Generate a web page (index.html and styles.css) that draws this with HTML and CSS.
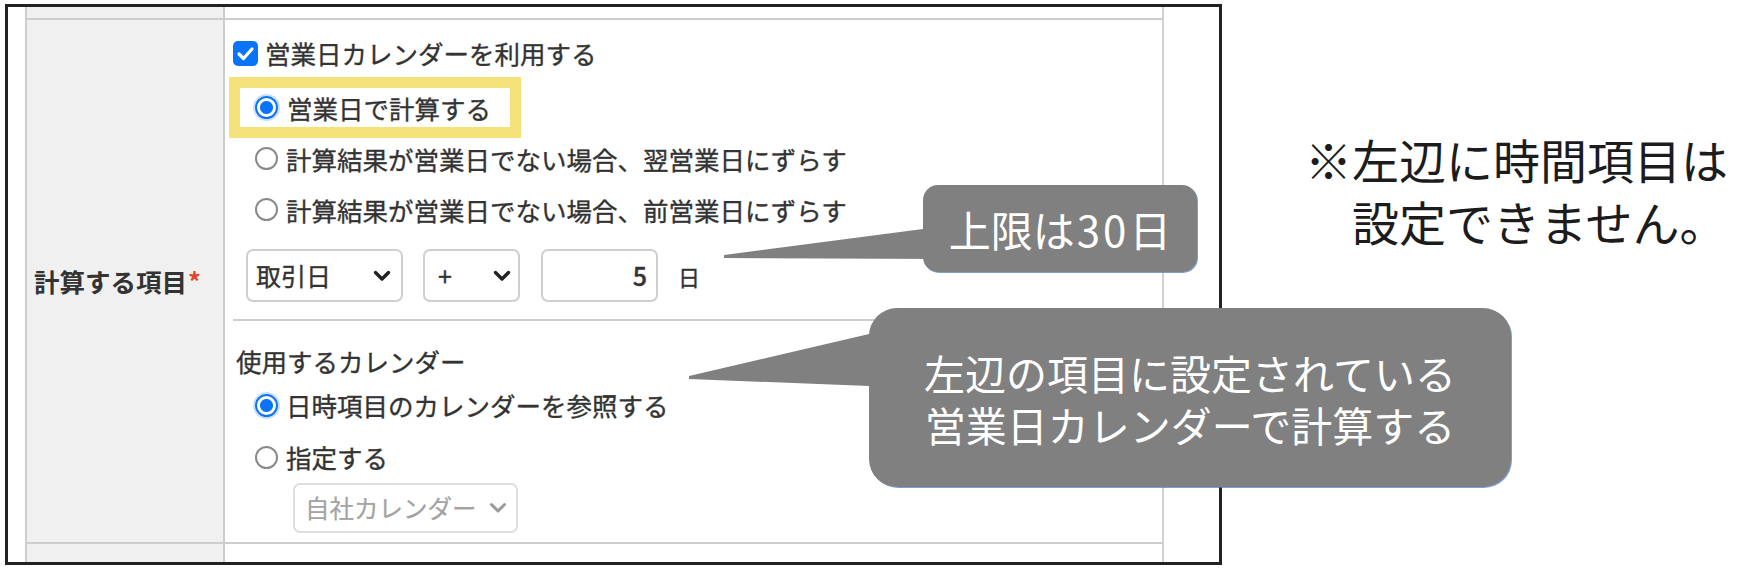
FILE: index.html
```
<!DOCTYPE html>
<html lang="ja">
<head>
<meta charset="utf-8">
<title>計算する項目</title>
<link rel="stylesheet" href="styles.css">
</head>
<body>
<div class="page">
  <div class="frame">
    <div class="table">
      <div class="lab top"></div>
      <div class="cell top"></div>

      <div class="lab main"><span>計算する項目</span><span class="req">*</span></div>
      <div class="cell main">
        <div class="row chk-row">
          <span class="checkbox"><svg viewBox="0 0 25 25" width="25" height="25"><path d="M6 13 L10.5 17.5 L19 8" fill="none" stroke="#fff" stroke-width="3.2" stroke-linecap="round" stroke-linejoin="round"/></svg></span>
          <span>営業日カレンダーを利用する</span>
        </div>
        <div class="row opt first">
          <span class="hl"><span class="radio on"></span><span>営業日で計算する</span></span>
        </div>
        <div class="row opt"><span class="radio"></span><span>計算結果が営業日でない場合、翌営業日にずらす</span></div>
        <div class="row opt"><span class="radio"></span><span>計算結果が営業日でない場合、前営業日にずらす</span></div>
        <div class="row sel-row">
          <div class="select s1"><span>取引日</span><svg class="chev" viewBox="0 0 18 12" width="18" height="12"><path d="M2.5 2.5 L9 9 L15.5 2.5" fill="none" stroke="#222" stroke-width="3.4" stroke-linecap="round" stroke-linejoin="round"/></svg></div>
          <div class="select s2"><span>+</span><svg class="chev" viewBox="0 0 18 12" width="18" height="12"><path d="M2.5 2.5 L9 9 L15.5 2.5" fill="none" stroke="#222" stroke-width="3.4" stroke-linecap="round" stroke-linejoin="round"/></svg></div>
          <div class="input">5</div>
          <span class="unit">日</span>
        </div>
        <div class="sep"></div>
        <div class="row sub">使用するカレンダー</div>
        <div class="row opt2"><span class="radio on"></span><span>日時項目のカレンダーを参照する</span></div>
        <div class="row opt2"><span class="radio"></span><span>指定する</span></div>
        <div class="row cal-row">
          <div class="select dis"><span>自社カレンダー</span><svg class="chev" viewBox="0 0 18 12" width="18" height="12"><path d="M2.5 2.5 L9 9 L15.5 2.5" fill="none" stroke="#9a9a9a" stroke-width="3" stroke-linecap="round" stroke-linejoin="round"/></svg></div>
        </div>
      </div>

      <div class="lab bot"></div>
      <div class="cell bot"></div>
    </div>
  </div>

  <div class="note">
    <p class="l1">※左辺に時間項目は</p>
    <p class="l2">設定できません。</p>
  </div>

  <svg class="tails" viewBox="0 0 1746 575" width="1746" height="575">
    <polygon points="945,229 923,229 724,255 724,258 945,259" fill="#808080"/>
    <polygon points="895,334 869,334 689,376 689,379 869,386 895,386" fill="#808080"/>
  </svg>
  <div class="bubble b1"><span>上限は</span><span class="num">30</span><span>日</span></div>
  <div class="bubble b2">左辺の項目に設定されている<br>営業日カレンダーで計算する</div>
</div>
</body>
</html>
```

FILE: styles.css
```
* { box-sizing: border-box; }
body { margin: 0; background: #fff; font-family: "Noto Sans CJK JP", "Noto Sans", sans-serif; }

.page {
  position: relative;
  width: 1746px;
  height: 575px;
  display: flex;
  align-items: flex-start;
  background: #fff;
  overflow: hidden;
}

.frame {
  margin: 4px 0 0 5px;
  width: 1217px;
  height: 561px;
  border: 3px solid #222;
  padding-left: 17px;
  display: flex;
  background: #fff;
}

.table {
  display: grid;
  grid-template-columns: 200px 939px;
  grid-template-rows: 11px 526px 18px;
}

.lab {
  background: #f0f0f0;
  border-left: 2px solid #cdcdcd;
  border-right: 2px solid #cdcdcd;
}
.cell {
  background: #fff;
  border-right: 2px solid #d2d2d2;
}
.main {
  border-top: 2px solid #cdcdcd;
  border-bottom: 2px solid #cdcdcd;
}

.lab.main {
  display: flex;
  align-items: center;
  padding-left: 7px;
  font-size: 25.5px;
  font-weight: bold;
  color: #333;
  line-height: 1;
}
.req { color: #e2452a; margin-left: 1px; }

.cell.main {
  padding: 8px 0 0 8px;
  display: flex;
  flex-direction: column;
  align-items: flex-start;
  color: #333;
  font-size: 25.5px;
  line-height: 1;
  -webkit-text-stroke: 0.35px #333;
}

.row {
  display: flex;
  align-items: center;
}
.chk-row { height: 50px; gap: 7px; }
.opt { height: 51px; padding-left: 22px; gap: 8px; }
.opt.first { margin-top: 4px; }
.opt2 { height: 52px; padding-left: 22px; gap: 8px; }

.checkbox {
  width: 25px;
  height: 25px;
  border-radius: 5px;
  background: #0b74f6;
  display: flex;
}

.radio {
  width: 23px;
  height: 23px;
  border-radius: 50%;
  border: 2px solid #8a8a8a;
  background: #fff;
  flex: none;
}
.radio.on {
  border-color: #0b74f6;
  background: radial-gradient(circle, #0b74f6 0 6px, #fff 7px);
  box-shadow: 0 0 0 2px rgba(80, 150, 255, 0.3);
}

.hl {
  display: inline-flex;
  align-items: center;
  gap: 9px;
  height: 39px;
  padding: 0 19px 0 15px;
  margin: 0 -19px 0 -15px;
  outline: 11px solid #f5e27a;
  background: #fff;
}

.sel-row { margin-top: 14px; height: 53px; padding-left: 13px; }

.select {
  height: 53px;
  border: 2px solid #cfcfcf;
  border-radius: 7px;
  display: flex;
  align-items: center;
  justify-content: space-between;
  background: #fff;
  font-size: 25px;
  color: #333;
}
.s1 { width: 157px; padding: 0 10px 0 8px; }
.s2 { width: 97px; margin-left: 20px; padding: 0 7px 0 13px; }
.chev { display: block; }

.input {
  width: 117px;
  height: 53px;
  margin-left: 21px;
  border: 2px solid #cfcfcf;
  border-radius: 7px;
  display: flex;
  align-items: center;
  justify-content: flex-end;
  padding-right: 9px;
  font-size: 25px;
  font-weight: 500;
  color: #333;
}
.unit { margin-left: 20px; font-size: 22px; color: #333; }

.sep {
  margin-top: 17px;
  width: 917px;
  height: 2px;
  background: #cdcdcd;
}

.sub { margin-top: 22px; height: 36px; padding-left: 3px; }

.cal-row { padding-left: 60px; }
.select.dis {
  width: 225px;
  height: 50px;
  border-color: #dedede;
  color: #a3a3a3;
  -webkit-text-stroke: 0.2px #a3a3a3;
  padding: 0 9px 0 10px;
  font-size: 24.5px;
}

.note {
  margin: 128px 0 0 83px;
  font-size: 47px;
  line-height: 62px;
  color: #1c1c1c;
  white-space: nowrap;
}
.note p { margin: 0; }
.note .l2 { padding-left: 47px; }

.tails {
  position: absolute;
  left: 0;
  top: 0;
  pointer-events: none;
}

.bubble {
  position: absolute;
  background: #808080;
  color: #fff;
  display: flex;
  align-items: center;
  justify-content: center;
  text-align: center;
  box-shadow: 1px 1px 0 rgba(70, 120, 190, 0.7);
}
.b1 {
  left: 923px;
  top: 185px;
  width: 274px;
  height: 87px;
  border-radius: 15px;
  font-size: 42px;
  line-height: 1;
}
.b1 .num { letter-spacing: 3px; padding-left: 2px; }
.b2 {
  left: 869px;
  top: 308px;
  width: 642px;
  height: 179px;
  border-radius: 28px;
  font-size: 41px;
  line-height: 52px;
}
```
